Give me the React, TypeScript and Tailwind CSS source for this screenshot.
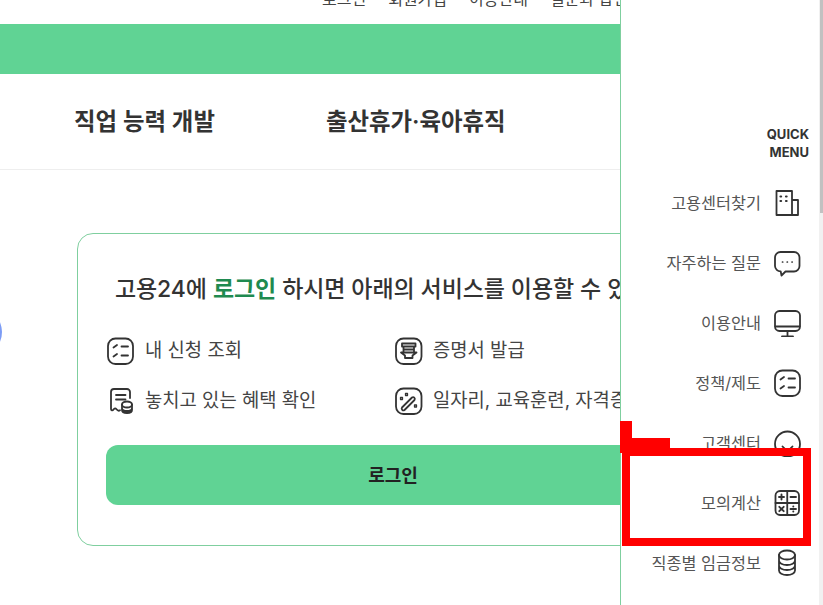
const kr = "font-['Inter','Noto_Sans_CJK_KR',sans-serif]";

function Svg({ children }: { children: React.ReactNode }) {
  return (
    <svg width={28} height={28} viewBox="0 0 28 28" fill="none" stroke="#333" strokeWidth="1.800" strokeLinecap="round" strokeLinejoin="round" className="shrink-0">
      {children}
    </svg>
  );
}

const Checklist = () => (
  <Svg>
    <rect x="1" y="1.500" width="25" height="25.500" rx="7.500" />
    <path d="M6.500 10.500l3.500-2.500M6.500 19.500l3.500-2.500M14.500 9.500h6.500M14.500 18.500h6.500" />
  </Svg>
);
const Building = () => (
  <Svg>
    <path d="M2.500 26V2h15.500v24zM18 11h6v15h-6M2.500 26h21.500" />
    <path d="M6.500 7.500h.6M12 7.500h.6M6.500 12h.6M12 12h.6" strokeWidth="2.200" />
  </Svg>
);
const Chat = () => (
  <Svg>
    <path d="M6.500 3h13.500a5.500 5.500 0 0 1 5.500 5.500v8.500a5.500 5.500 0 0 1-5.500 5.500h-8.500l-4 4-.8-4.200A5.500 5.500 0 0 1 1 17V8.500A5.500 5.500 0 0 1 6.500 3z" />
    <path d="M8.500 13h.2M13.200 13h.2M18 13h.2" strokeWidth="1.700" />
  </Svg>
);
const Monitor = () => (
  <Svg>
    <rect x="1" y="2" width="25" height="20" rx="4.500" />
    <path d="M1.500 17.500h24M13.500 22v5.500M8 27.500h11" />
  </Svg>
);
const Headset = () => (
  <Svg>
    <circle cx="13.500" cy="15" r="12.500" />
    <path d="M8.500 17.500c1.500 2 3 3 5 3s3.500-1 5-3" />
  </Svg>
);
const Calc = () => (
  <Svg>
    <rect x="1.500" y="2" width="23.500" height="24" rx="4.500" />
    <path d="M13.250 2v24M1.500 14h23.500" />
    <path d="M7.500 5.500v5M5 8h5M16.500 8h5.500M5.300 17.800l4.400 4.400M9.700 17.800l-4.400 4.400M16.500 20h5.500M19.250 17.500h.1M19.250 22.500h.1" strokeWidth="1.900" />
  </Svg>
);
const Coins = () => (
  <Svg>
    <ellipse cx="13" cy="6" rx="8" ry="4.500" />
    <path d="M5 6v15.500c0 2.500 3.500 4.500 8 4.500s8-2 8-4.500V6M5 11.500c0 2.500 3.500 4.500 8 4.500s8-2 8-4.500M5 16.500c0 2.500 3.500 4.500 8 4.500s8-2 8-4.500" />
  </Svg>
);
const Receipt = () => (
  <Svg>
    <path d="M23 11V5a3 3 0 0 0-3-3H7a3 3 0 0 0-3 3v17c0 1.500 1.500 2 2.500.5s2-1.500 3-.2 2 2 3.500 1" />
    <path d="M9 8h9.500M9 12.500h9.500" />
    <ellipse cx="20" cy="17.500" rx="5" ry="3" />
    <path d="M15 17.500v5.500c0 1.700 2.200 3 5 3s5-1.300 5-3v-5.500M15 21c0 1.700 2.200 3 5 3s5-1.300 5-3" />
  </Svg>
);
const Certificate = () => (
  <Svg>
    <rect x="1" y="1.500" width="25.500" height="25.500" rx="7.500" />
    <path d="M7 6.500h13.500v3H7zM8.500 9.500v6M19 9.500v6M8.500 12.500h10.500M6 15.500h15.500l-4 3v2.500h-7.500v-2.500z" />
  </Svg>
);
const Wand = () => (
  <Svg>
    <rect x="1" y="1.500" width="25.500" height="25.500" rx="7.500" />
    <path d="M7 20.500l10-10a1.800 1.800 0 0 1 2.500 2.500l-10 10a1.800 1.800 0 0 1-2.500-2.500z" />
    <path d="M10.500 6.500h2v2h-2zM5.500 10.500h2v2h-2zM19.500 18h2v2h-2z" strokeWidth="1.300" />
  </Svg>
);

const quickItems = [
  { label: '고용센터찾기', icon: <Building /> },
  { label: '자주하는 질문', icon: <Chat /> },
  { label: '이용안내', icon: <Monitor /> },
  { label: '정책/제도', icon: <Checklist /> },
  { label: '고객센터', icon: <Headset /> },
  { label: '모의계산', icon: <Calc /> },
  { label: '직종별 임금정보', icon: <Coins /> },
];

export default function App() {
  return (
    <div className={`relative flex h-[605px] w-[823px] overflow-hidden bg-white ${kr}`}>
      <main className="relative h-full w-[620px] shrink-0 overflow-hidden">
        {/* top links, cut by the scroll position */}
        <div className="flex h-[24px] items-end gap-[22px] overflow-hidden whitespace-nowrap pb-[14px] pl-[322px] text-[16px] leading-[22px] text-[#444]">
          <span>로그인</span>
          <span>회원가입</span>
          <span>이용안내</span>
          <span className="-mx-[11px] h-[22px] w-px bg-[#dddddd]" />
          <span>질문과 답변</span>
        </div>
        <div className="h-[50px] bg-[#60d394]" />
        <nav className="flex h-[96px] items-center gap-[111px] whitespace-nowrap border-b border-[#eeeeee] pl-[74px] text-[23.400px] font-semibold text-[#333]">
          <span>직업 능력 개발</span>
          <span>출산휴가·육아휴직</span>
        </nav>

        <section className="ml-[77px] mt-[63px] h-[313px] w-[632px] rounded-2xl border border-[#7fcf9f] px-[28px] pt-[37px]">
          <h2 className="whitespace-nowrap pl-[9px] text-[23px] font-medium leading-[36px] tracking-[-0.1px] text-[#333]">
            고용24에 <span className="font-semibold text-[#1f8a50]">로그인</span> 하시면 아래의 서비스를 이용할 수 있습니다.
          </h2>
          <ul className="mt-[30px] grid w-[600px] grid-cols-[288px_1fr] gap-y-[22px] whitespace-nowrap pl-px text-[18.800px] text-[#444]">
            <li className="flex h-[28px] items-center gap-[10px]"><Checklist />내 신청 조회</li>
            <li className="flex h-[28px] items-center gap-[10px]"><Certificate />증명서 발급</li>
            <li className="flex h-[28px] items-center gap-[10px]"><Receipt />놓치고 있는 혜택 확인</li>
            <li className="flex h-[28px] items-center gap-[10px]"><Wand />일자리, 교육훈련, 자격증 정보</li>
          </ul>
          <button className="mt-[30px] h-[60px] w-[574px] rounded-xl bg-[#60d394] text-[18px] font-semibold text-[#222]">
            로그인
          </button>
        </section>

        <div className="absolute left-[-48px] top-[307px] h-[50px] w-[50px] rounded-full bg-[#7c9cf5]" />
      </main>

      <aside className="h-full w-[199px] shrink-0 border-l border-[#7fcf9f] pr-[17px] pt-[125px]">
        <div className="-mr-[7px] text-right text-[13px] font-bold leading-[18px] text-[#333]">
          QUICK<br />MENU
        </div>
        <ul className="mt-[28px] flex flex-col gap-[32px]">
          {quickItems.map((item) => (
            <li key={item.label} className="flex h-[28px] items-center justify-end gap-[13px] whitespace-nowrap text-[16.300px] text-[#555]">
              {item.label}
              {item.icon}
            </li>
          ))}
        </ul>
      </aside>
      <div className="h-full w-[4px] shrink-0 bg-[#f1f1f1] pl-[1px]">
        <div className="h-[213px] bg-[#c1c1c1]" />
      </div>

      {/* red annotation drawn over the page */}
      <div className="absolute left-[622px] top-[448px] h-[98px] w-[189px] border-[8px] border-[#ff0000]" />
      <div className="absolute left-[620px] top-[421px] h-[32px] w-[12px] bg-[#ff0000]" />
      <div className="absolute left-[620px] top-[438px] h-[15px] w-[50px] bg-[#ff0000]" />
    </div>
  );
}
